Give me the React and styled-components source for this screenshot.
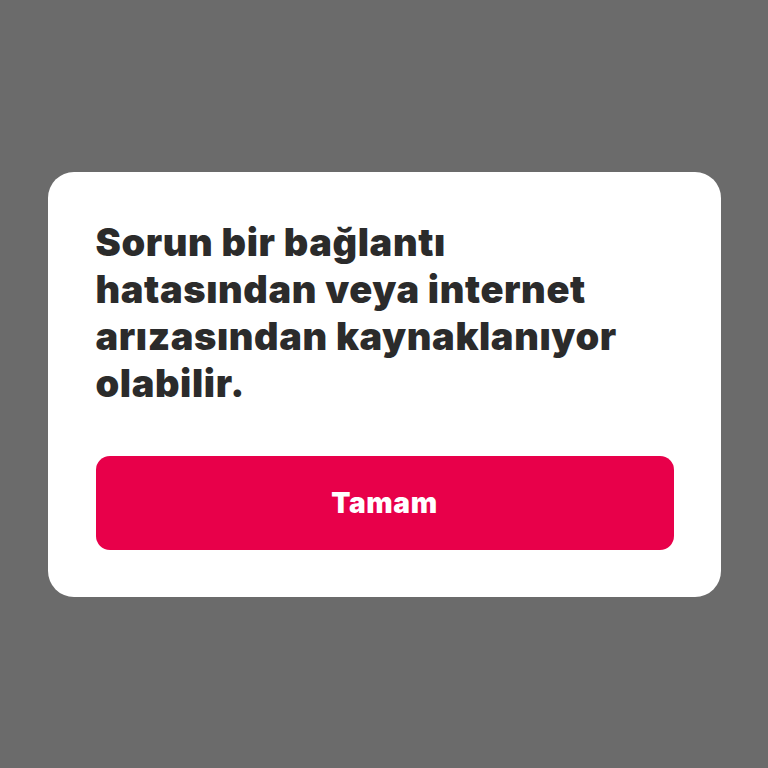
import React from "react";
import styled, { createGlobalStyle } from "styled-components";

const GlobalStyle = createGlobalStyle`
  html, body {
    margin: 0;
    padding: 0;
    background: #6b6b6b;
  }
  * { box-sizing: border-box; }
`;

const Screen = styled.div`
  width: 768px;
  height: 768px;
  display: flex;
  align-items: center;
  justify-content: center;
  background: #6b6b6b;
  font-family: Inter, "Noto Sans", sans-serif;
`;

const Dialog = styled.div`
  width: 673px;
  background: #ffffff;
  border-radius: 26px;
  padding: 47px 47px 47px 48px;
  display: flex;
  flex-direction: column;
  gap: 49px;
`;

const Message = styled.p`
  margin: 0;
  color: #2b2b2b;
  font-size: 38px;
  font-weight: 900;
  line-height: 47px;
  letter-spacing: 0.6px;
`;

const ConfirmButton = styled.button`
  height: 94px;
  border: none;
  border-radius: 14px;
  background: #e8004a;
  color: #ffffff;
  font-family: inherit;
  font-size: 28px;
  font-weight: 900;
  letter-spacing: 0.6px;
  cursor: pointer;
`;

export default function App() {
  return (
    <>
      <GlobalStyle />
      <Screen>
        <Dialog>
          <Message>
            Sorun bir bağlantı
            <br />
            hatasından veya internet
            <br />
            arızasından kaynaklanıyor
            <br />
            olabilir.
          </Message>
          <ConfirmButton>Tamam</ConfirmButton>
        </Dialog>
      </Screen>
    </>
  );
}
